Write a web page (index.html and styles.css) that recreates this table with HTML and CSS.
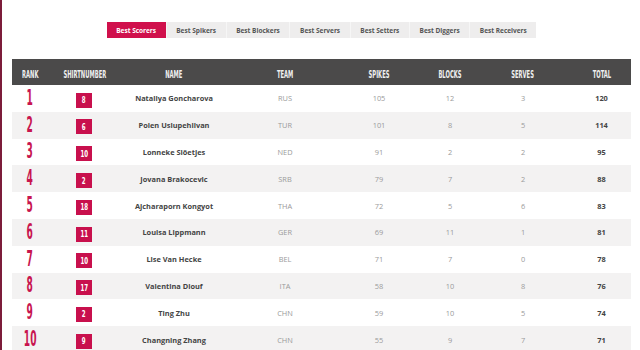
FILE: index.html
```html
<!DOCTYPE html>
<html>
<head>
<meta charset="utf-8">
<link rel="stylesheet" href="styles.css">
</head>
<body>
<div class="page">
  <nav class="tabs">
    <a class="tab active">Best Scorers</a>
    <a class="tab">Best Spikers</a>
    <a class="tab">Best Blockers</a>
    <a class="tab">Best Servers</a>
    <a class="tab">Best Setters</a>
    <a class="tab">Best Diggers</a>
    <a class="tab">Best Receivers</a>
  </nav>
  <div class="table">
    <div class="row head">
      <div class="c"><span class="hd">RANK</span></div>
      <div class="c"><span class="hd">SHIRTNUMBER</span></div>
      <div class="c"><span class="hd">NAME</span></div>
      <div class="c"><span class="hd">TEAM</span></div>
      <div class="c"><span class="hd">SPIKES</span></div>
      <div class="c"><span class="hd">BLOCKS</span></div>
      <div class="c"><span class="hd">SERVES</span></div>
      <div class="c total"><span class="hd">TOTAL</span></div>
    </div>
    <div class="row">
      <div class="c"><span class="rank">1</span></div>
      <div class="c"><span class="badge"><span class="bn">8</span></span></div>
      <div class="c name">Nataliya Goncharova</div>
      <div class="c num">RUS</div>
      <div class="c num">105</div>
      <div class="c num">12</div>
      <div class="c num">3</div>
      <div class="c total tv">120</div>
    </div>
    <div class="row">
      <div class="c"><span class="rank">2</span></div>
      <div class="c"><span class="badge"><span class="bn">6</span></span></div>
      <div class="c name">Polen Uslupehlivan</div>
      <div class="c num">TUR</div>
      <div class="c num">101</div>
      <div class="c num">8</div>
      <div class="c num">5</div>
      <div class="c total tv">114</div>
    </div>
    <div class="row">
      <div class="c"><span class="rank">3</span></div>
      <div class="c"><span class="badge"><span class="bn">10</span></span></div>
      <div class="c name">Lonneke Slöetjes</div>
      <div class="c num">NED</div>
      <div class="c num">91</div>
      <div class="c num">2</div>
      <div class="c num">2</div>
      <div class="c total tv">95</div>
    </div>
    <div class="row">
      <div class="c"><span class="rank">4</span></div>
      <div class="c"><span class="badge"><span class="bn">2</span></span></div>
      <div class="c name">Jovana Brakocevic</div>
      <div class="c num">SRB</div>
      <div class="c num">79</div>
      <div class="c num">7</div>
      <div class="c num">2</div>
      <div class="c total tv">88</div>
    </div>
    <div class="row">
      <div class="c"><span class="rank">5</span></div>
      <div class="c"><span class="badge"><span class="bn">18</span></span></div>
      <div class="c name">Ajcharaporn Kongyot</div>
      <div class="c num">THA</div>
      <div class="c num">72</div>
      <div class="c num">5</div>
      <div class="c num">6</div>
      <div class="c total tv">83</div>
    </div>
    <div class="row">
      <div class="c"><span class="rank">6</span></div>
      <div class="c"><span class="badge"><span class="bn">11</span></span></div>
      <div class="c name">Louisa Lippmann</div>
      <div class="c num">GER</div>
      <div class="c num">69</div>
      <div class="c num">11</div>
      <div class="c num">1</div>
      <div class="c total tv">81</div>
    </div>
    <div class="row">
      <div class="c"><span class="rank">7</span></div>
      <div class="c"><span class="badge"><span class="bn">10</span></span></div>
      <div class="c name">Lise Van Hecke</div>
      <div class="c num">BEL</div>
      <div class="c num">71</div>
      <div class="c num">7</div>
      <div class="c num">0</div>
      <div class="c total tv">78</div>
    </div>
    <div class="row">
      <div class="c"><span class="rank">8</span></div>
      <div class="c"><span class="badge"><span class="bn">17</span></span></div>
      <div class="c name">Valentina Diouf</div>
      <div class="c num">ITA</div>
      <div class="c num">58</div>
      <div class="c num">10</div>
      <div class="c num">8</div>
      <div class="c total tv">76</div>
    </div>
    <div class="row">
      <div class="c"><span class="rank">9</span></div>
      <div class="c"><span class="badge"><span class="bn">2</span></span></div>
      <div class="c name">Ting Zhu</div>
      <div class="c num">CHN</div>
      <div class="c num">59</div>
      <div class="c num">10</div>
      <div class="c num">5</div>
      <div class="c total tv">74</div>
    </div>
    <div class="row">
      <div class="c"><span class="rank">10</span></div>
      <div class="c"><span class="badge"><span class="bn">9</span></span></div>
      <div class="c name">Changning Zhang</div>
      <div class="c num">CHN</div>
      <div class="c num">55</div>
      <div class="c num">9</div>
      <div class="c num">7</div>
      <div class="c total tv">71</div>
    </div>
  </div>
</div>
</body>
</html>
```

FILE: styles.css
```css
html, body {
  margin: 0;
  padding: 0;
  background: #ffffff;
}
body {
  font-family: "Open Sans", "DejaVu Sans", sans-serif;
  overflow: hidden;
}
.page {
  border-left: 2px solid #7c1c3a;
  min-height: 350px;
  padding: 22px 9px 0 10px;
  box-sizing: border-box;
}
.tabs {
  display: flex;
  justify-content: center;
  height: 16px;
  margin-bottom: 21px;
}
.tab {
  display: flex;
  align-items: center;
  justify-content: center;
  padding: 0 9.6px;
  background: #eeeded;
  color: #555555;
  font-size: 6.5px;
  font-weight: 700;
  border-left: 1px solid #f6f6f6;
}
.tab:first-child {
  border-left: none;
}
.tab.active {
  background: #d0104c;
  color: #ffffff;
}
.table {
  width: 619px;
}
.row {
  display: grid;
  grid-template-columns: 36px 72px 108px 114px 74px 68px 78px 69px;
  height: 26.8px;
  align-items: center;
  background: #ffffff;
}
.row:nth-child(odd) {
  background: #f3f2f2;
}
.row.head {
  height: 26px;
  background: #4b4a4a;
}
.c {
  text-align: center;
  white-space: nowrap;
}
.total {
  padding-left: 10px;
}
.hd {
  display: inline-block;
  font-family: "DejaVu Sans Condensed", "DejaVu Sans", sans-serif;
  font-weight: 700;
  font-size: 10px;
  color: #f0f0f0;
  transform: scaleX(0.58);
}
.rank {
  display: inline-block;
  font-family: "DejaVu Sans Condensed", "DejaVu Sans", sans-serif;
  font-weight: 700;
  font-size: 21px;
  line-height: 22px;
  color: #c8154f;
  transform: scaleX(0.48);
}
.badge {
  display: inline-flex;
  width: 16px;
  height: 15px;
  align-items: center;
  justify-content: center;
  background: #c8104d;
  vertical-align: middle;
}
.bn {
  display: inline-block;
  font-family: "DejaVu Sans Condensed", "DejaVu Sans", sans-serif;
  font-weight: 700;
  font-size: 8.5px;
  color: #ffffff;
  transform: scaleX(0.72);
}
.name {
  font-size: 7.4px;
  font-weight: 700;
  color: #444444;
}
.num {
  font-size: 7.4px;
  color: #9a9a9a;
}
.tv {
  font-size: 7.4px;
  font-weight: 700;
  color: #444444;
}
```
